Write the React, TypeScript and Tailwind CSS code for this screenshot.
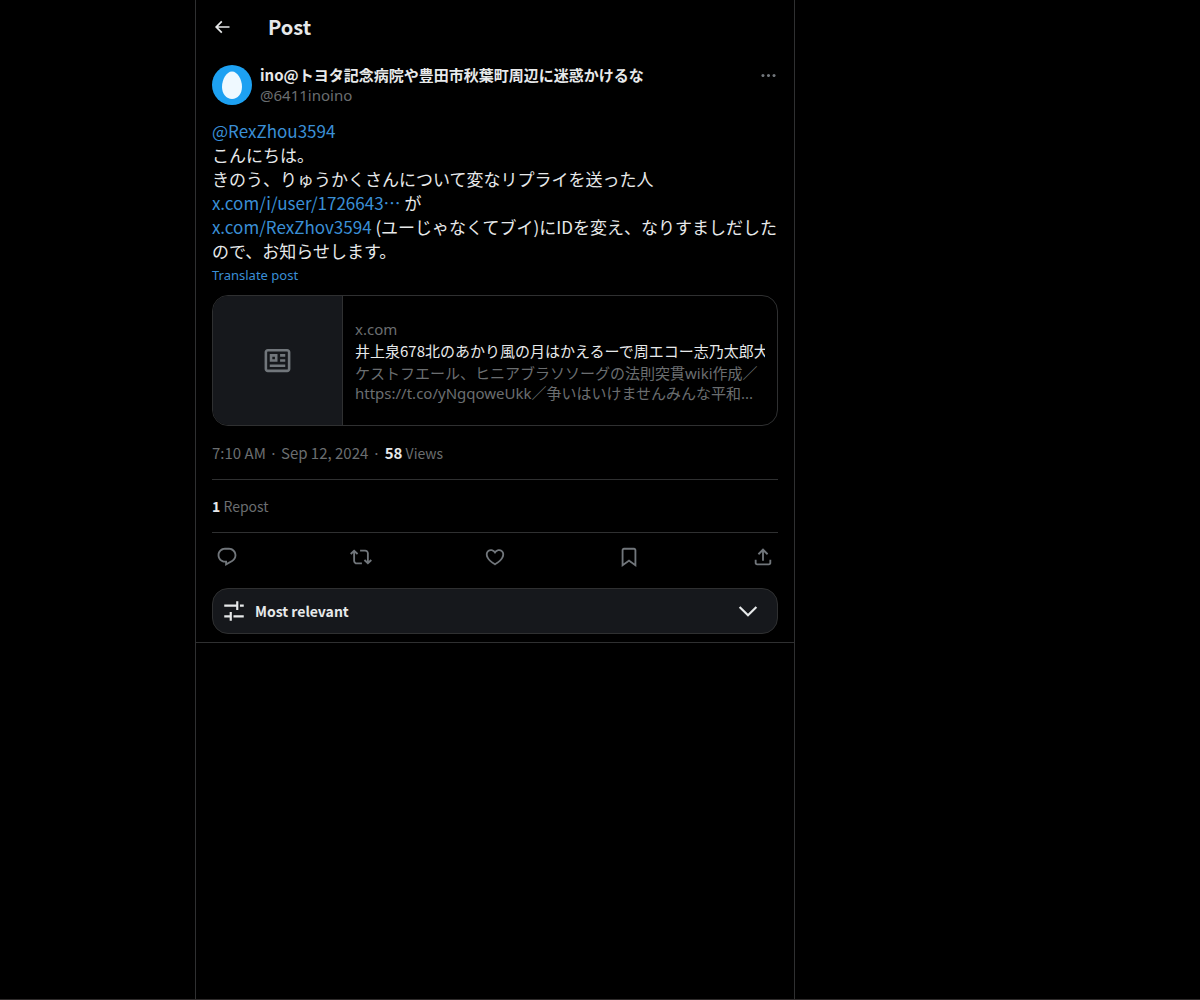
import React from "react";

const icons = {
  back: "M7.414 13l5.043 5.04-1.414 1.42L3.586 12l7.457-7.46 1.414 1.42L7.414 11H21v2H7.414z",
  more: "M3 12c0-1.1.9-2 2-2s2 .9 2 2-.9 2-2 2-2-.9-2-2zm9 2c1.1 0 2-.9 2-2s-.9-2-2-2-2 .9-2 2 .9 2 2 2zm7 0c1.1 0 2-.9 2-2s-.9-2-2-2-2 .9-2 2 .9 2 2 2z",
  reply:
    "M1.751 10c0-4.42 3.584-8 8.005-8h4.366c4.49 0 8.129 3.64 8.129 8.13 0 2.96-1.607 5.68-4.196 7.11l-8.054 4.46v-3.69h-.067c-4.49.1-8.183-3.51-8.183-8.01zm8.005-6c-3.317 0-6.005 2.69-6.005 6 0 3.37 2.77 6.08 6.138 6.01l.351-.01h1.761v2.3l5.087-2.81c1.951-1.08 3.163-3.13 3.163-5.36 0-3.39-2.744-6.13-6.129-6.13H9.756z",
  repost:
    "M4.5 3.88l4.432 4.14-1.364 1.46L5.5 7.55V16c0 1.1.896 2 2 2H13v2H7.5c-2.209 0-4-1.79-4-4V7.55L1.432 9.48.068 8.02 4.5 3.88zM16.5 6H11V4h5.5c2.209 0 4 1.79 4 4v8.45l2.068-1.93 1.364 1.46-4.432 4.14-4.432-4.14 1.364-1.46 2.068 1.93V8c0-1.1-.896-2-2-2z",
  like: "M16.697 5.5c-1.222-.06-2.679.51-3.89 2.16l-.805 1.09-.806-1.09C9.984 6.01 8.526 5.44 7.304 5.5c-1.243.07-2.349.78-2.91 1.91-.552 1.12-.633 2.78.479 4.82 1.074 1.97 3.257 4.27 7.129 6.61 3.87-2.34 6.052-4.64 7.126-6.61 1.111-2.04 1.03-3.7.477-4.82-.561-1.13-1.666-1.84-2.908-1.91zm4.187 7.69c-1.351 2.48-4.001 5.12-8.379 7.67l-.503.3-.504-.3c-4.379-2.55-7.029-5.19-8.382-7.67-1.36-2.5-1.41-4.86-.514-6.67.887-1.79 2.647-2.91 4.601-3.01 1.651-.09 3.368.56 4.798 2.01 1.429-1.45 3.146-2.1 4.796-2.01 1.954.1 3.714 1.22 4.601 3.01.896 1.81.846 4.17-.514 6.67z",
  bookmark:
    "M4 4.5C4 3.12 5.119 2 6.5 2h11C18.881 2 20 3.12 20 4.5v18.44l-8-5.71-8 5.71V4.5zM6.5 4c-.276 0-.5.22-.5.5v14.56l6-4.29 6 4.29V4.5c0-.28-.224-.5-.5-.5h-11z",
  share:
    "M12 2.59l5.7 5.7-1.41 1.42L13 6.41V16h-2V6.41l-3.3 3.3-1.41-1.42L12 2.59zM21 15l-.02 3.51c0 1.38-1.12 2.49-2.5 2.49H5.5C4.11 21 3 19.88 3 18.5V15h2v3.5c0 .28.22.5.5.5h12.98c.28 0 .5-.22.5-.5L19 15h2z",
  article:
    "M1.998 5.5c0-1.38 1.119-2.5 2.5-2.5h15c1.381 0 2.5 1.12 2.5 2.5v13c0 1.38-1.119 2.5-2.5 2.5h-15c-1.381 0-2.5-1.12-2.5-2.5v-13zm2.5-.5c-.276 0-.5.22-.5.5v13c0 .28.224.5.5.5h15c.276 0 .5-.22.5-.5v-13c0-.28-.224-.5-.5-.5h-15zM6 7h6v6H6V7zm2 2v2h2V9H8zm10 0h-4V7h4v2zm0 4h-4v-2h4v2zm-.002 4h-12v-2h12v2z",
  chevron: "M3.543 8.96l1.414-1.42L12 14.59l7.043-7.05 1.414 1.42L12 17.41 3.543 8.96z",
  sliders:
    "M14 6V3h2v8h-2V8H3V6h11zm7 2h-3.5V6H21v2zM8 16v-3h2v8H8v-3H3v-2h5zm13 2h-9.5v-2H21v2z",
};

function Icon({ name, className }: { name: keyof typeof icons; className: string }) {
  return (
    <svg viewBox="0 0 24 24" aria-hidden="true" fill="currentColor" className={className}>
      <path d={icons[name]} />
    </svg>
  );
}

const actions: { name: keyof typeof icons; label: string }[] = [
  { name: "reply", label: "Reply" },
  { name: "repost", label: "Repost" },
  { name: "like", label: "Like" },
  { name: "bookmark", label: "Bookmark" },
  { name: "share", label: "Share post" },
];

export default function App() {
  return (
    <div className="grid min-h-screen grid-cols-[195px_minmax(0,600px)_1fr] border-b border-[#2f2c2c] bg-black font-['Noto_Sans_CJK_JP',sans-serif] text-[15px] leading-5 text-[#e7e9ea]">
      <main className="col-start-2 border-x border-[#2f3031]">
        <header className="flex h-[53px] items-center gap-9 px-4">
          <button type="button" aria-label="Back" className="flex w-5 justify-center">
            <Icon name="back" className="size-5" />
          </button>
          <h1 className="text-xl font-bold leading-6">Post</h1>
        </header>

        <article className="px-4 pt-3">
          <div className="flex gap-2">
            <a href="#profile" aria-label="Profile of ino" className="size-10 shrink-0">
              <svg viewBox="0 0 40 40" aria-hidden="true" className="size-10">
                <circle cx="20" cy="20" r="20" fill="#1da1f2" />
                <path d="M20 6.500c5.600 0 10 8.300 10 15.200 0 7-4.300 12.300-10 12.300s-10-5.300-10-12.300C10 14.800 14.400 6.500 20 6.500z" fill="#eff9ff" />
              </svg>
            </a>
            <div className="min-w-0 flex-1">
              <a href="#profile" className="block truncate font-bold">
                ino@トヨタ記念病院や豊田市秋葉町周辺に迷惑かけるな
              </a>
              <a href="#profile" className="block font-['Noto_Sans',sans-serif] text-[#6b6e70]">
                @6411inoino
              </a>
            </div>
            <button type="button" aria-label="More" className="flex h-5 items-center text-[#71767b]">
              <Icon name="more" className="size-[19px]" />
            </button>
          </div>

          <p lang="ja" className="mt-3.5 text-[17px] leading-6">
            <a href="#mention" className="text-[#3a8fd6]">@RexZhou3594</a>
            <br />
            こんにちは。
            <br />
            きのう、りゅうかくさんについて変なリプライを送った人
            <br />
            <a href="#user" className="text-[#3a8fd6]">x.com/i/user/1726643…</a> が
            <br />
            <a href="#rex" className="text-[#3a8fd6]">x.com/RexZhov3594</a>{" "}
            (ユーじゃなくてブイ)にIDを変え、なりすましだしたので、お知らせします。
          </p>
          <button type="button" className="block font-['Noto_Sans',sans-serif] text-[13px] leading-6 text-[#3a8fd6]">
            Translate post
          </button>

          <a
            href="#card"
            className="mt-2 flex overflow-hidden rounded-2xl border border-[#2f3031] font-['Noto_Sans','Noto_Sans_CJK_JP',sans-serif] text-[#6b6e70]"
          >
            <span className="flex h-[129px] w-[130px] shrink-0 items-center justify-center border-r border-[#2f3031] bg-[#16181c]">
              <Icon name="article" className="size-[31px] text-[#71767b]" />
            </span>
            <span className="flex min-w-0 flex-1 flex-col justify-center gap-0.5 px-3">
              <span>x.com</span>
              <span className="overflow-hidden whitespace-nowrap font-['Noto_Sans_CJK_JP',sans-serif] text-[#e7e9ea]">
                井上泉678北のあかり風の月はかえるーで周エコー志乃太郎大
              </span>
              <span>
                ケストフエール、ヒニアブラソソーグの法則突貫wiki作成／ https://t.co/yNgqoweUkk／争いはいけませんみんな平和...
              </span>
            </span>
          </a>

          <div className="flex gap-1 pt-[17px] pb-4 text-[#6b6e70]">
            <a href="#time">7:10 AM · Sep 12, 2024</a>
            <span>·</span>
            <span className="text-sm leading-5">
              <b className="text-[15px] text-[#e7e9ea]">58</b> Views
            </span>
          </div>
          <div className="border-y border-[#2f3031] py-4 text-sm leading-5 text-[#6b6e70]">
            <a href="#reposts">
              <b className="text-[#e7e9ea]">1</b> Repost
            </a>
          </div>

          <div className="flex h-12 items-center justify-between px-1 text-[#71767b]">
            {actions.map((a) => (
              <button key={a.name} type="button" aria-label={a.label}>
                <Icon name={a.name} className="size-[22px]" />
              </button>
            ))}
          </div>
        </article>

        <div className="border-b border-[#2f3031] px-4 pt-[7px] pb-2">
          <button
            type="button"
            className="flex h-[46px] w-full items-center rounded-2xl border border-[#2f3031] bg-[#16181c] pr-4 pl-2 font-bold"
          >
            <Icon name="sliders" className="size-[26px]" />
            <span className="ml-2 text-sm">Most relevant</span>
            <Icon name="chevron" className="ml-auto size-[26px]" />
          </button>
        </div>
      </main>
    </div>
  );
}
